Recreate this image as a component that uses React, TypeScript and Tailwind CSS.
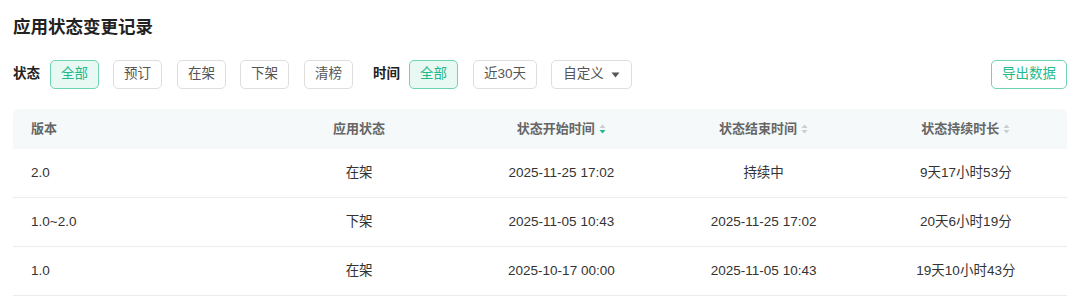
import React from "react";

const FONT = '"Liberation Sans", "Noto Sans CJK SC", Arial, sans-serif';

function Btn({ children, active, className = "" }: { children: React.ReactNode; active?: boolean; className?: string }) {
  return (
    <div
      className={
        "h-[29px] flex items-center justify-center rounded-[5px] border text-[13.5px] " +
        (active
          ? "border-[#6fd3b3] bg-[#e8f8f2] text-[#1fb98a] "
          : "border-[#dedede] bg-white text-[#555] ") +
        className
      }
    >
      {children}
    </div>
  );
}

function Sort({ active }: { active?: boolean }) {
  return (
    <svg width="7" height="10" viewBox="0 0 7 10" className="ml-[4px]">
      <path d="M3.5 0.5 L6.5 4 L0.5 4 Z" fill="#c9cdd4" />
      <path d="M3.5 9.5 L6.5 6 L0.5 6 Z" fill={active ? "#1fb98a" : "#c9cdd4"} />
    </svg>
  );
}

const rows = [
  ["2.0", "在架", "2025-11-25 17:02", "持续中", "9天17小时53分"],
  ["1.0~2.0", "下架", "2025-11-05 10:43", "2025-11-25 17:02", "20天6小时19分"],
  ["1.0", "在架", "2025-10-17 00:00", "2025-11-05 10:43", "19天10小时43分"],
];

export default function App() {
  return (
    <div className="w-[1080px] h-[303px] bg-white px-[13px] pt-[15px] overflow-hidden" style={{ fontFamily: FONT }}>
      <div className="text-[17.5px] leading-[24px] font-bold text-[#222]">应用状态变更记录</div>
      <div className="mt-[21px] flex items-center">
        <span className="text-[13.5px] font-bold text-[#222] mr-[10px]">状态</span>
        <Btn active className="w-[49px]">全部</Btn>
        <Btn className="w-[49px] ml-[14px]">预订</Btn>
        <Btn className="w-[49px] ml-[15px]">在架</Btn>
        <Btn className="w-[49px] ml-[14px]">下架</Btn>
        <Btn className="w-[49px] ml-[15px]">清榜</Btn>
        <span className="text-[13.5px] font-bold text-[#222] ml-[20px] mr-[9px]">时间</span>
        <Btn active className="w-[49px]">全部</Btn>
        <Btn className="w-[64px] ml-[15px]">近30天</Btn>
        <Btn className="w-[81px] ml-[14px]">
          <span>自定义</span>
          <svg width="9" height="6" viewBox="0 0 9 6" className="ml-[7px]">
            <path d="M0.5 0.5 L8.5 0.5 L4.5 5.5 Z" fill="#555" />
          </svg>
        </Btn>
        <div className="flex-1" />
        <div className="h-[29px] w-[76px] flex items-center justify-center rounded-[5px] border border-[#6fd3b3] bg-white text-[#1fb98a] text-[13.5px]">
          导出数据
        </div>
      </div>
      <div className="mt-[20px] w-[1054px]">
        <div className="grid grid-cols-[245px_1fr_1fr_1fr_1fr] h-[40px] items-center bg-[#f5f9fa] rounded-t-[6px] text-[13px] text-[#666] font-bold">
          <div className="pl-[18px]">版本</div>
          <div className="text-center">应用状态</div>
          <div className="flex items-center justify-center">状态开始时间<Sort active /></div>
          <div className="flex items-center justify-center">状态结束时间<Sort /></div>
          <div className="flex items-center justify-center">状态持续时长<Sort /></div>
        </div>
        {rows.map((r, i) => (
          <div key={i} className="grid grid-cols-[245px_1fr_1fr_1fr_1fr] h-[49px] items-center border-b border-[#ececec] text-[13.5px] text-[#333]">
            <div className="pl-[18px]">{r[0]}</div>
            <div className="text-center">{r[1]}</div>
            <div className="text-center">{r[2]}</div>
            <div className="text-center">{r[3]}</div>
            <div className="text-center">{r[4]}</div>
          </div>
        ))}
      </div>
    </div>
  );
}
